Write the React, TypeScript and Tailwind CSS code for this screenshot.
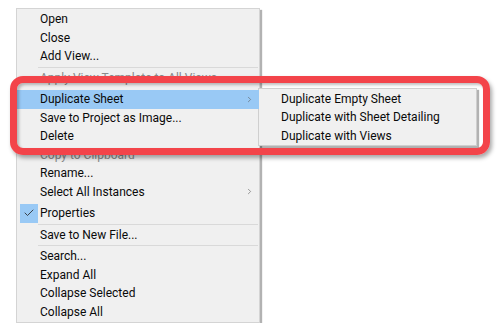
import { Check, ChevronRight } from "lucide-react"

type Row =
  | { kind: "item"; label: string; sub?: boolean; active?: boolean; checked?: boolean; dim?: boolean }
  | { kind: "sep"; line?: boolean }

const MENU: Row[] = [
  { kind: "item", label: "Open" },
  { kind: "item", label: "Close" },
  { kind: "item", label: "Add View..." },
  { kind: "sep", line: true },
  { kind: "item", label: "Apply View Template to All Views", dim: true },
  { kind: "sep" },
  { kind: "item", label: "Duplicate Sheet", sub: true, active: true },
  { kind: "item", label: "Save to Project as Image..." },
  { kind: "item", label: "Delete" },
  { kind: "item", label: "Copy to Clipboard", dim: true },
  { kind: "item", label: "Rename..." },
  { kind: "item", label: "Select All Instances", sub: true },
  { kind: "sep" },
  { kind: "item", label: "Properties", checked: true },
  { kind: "sep", line: true },
  { kind: "item", label: "Save to New File..." },
  { kind: "sep", line: true },
  { kind: "item", label: "Search..." },
  { kind: "item", label: "Expand All" },
  { kind: "item", label: "Collapse Selected" },
  { kind: "item", label: "Collapse All" },
]

const SUBMENU = ["Duplicate Empty Sheet", "Duplicate with Sheet Detailing", "Duplicate with Views"]

function MenuRow({ row }: { row: Row }) {
  if (row.kind === "sep") {
    return (
      <div className="h-[3px] flex items-center pl-[21px] pr-[1px]">
        {row.line && <div className="h-px w-full bg-[#d9d9d9]" />}
      </div>
    )
  }
  return (
    <div className={`relative h-[18.5px] flex items-center ${row.active ? "bg-[#99c9f5]" : ""}`}>
      <div className="w-[23px] h-full flex items-center justify-center">
        {row.checked && (
          <div className="w-[18px] h-[19px] bg-[#99c9f5] flex items-center justify-center">
            <Check size={12} strokeWidth={1.6} className="text-[#222]" />
          </div>
        )}
      </div>
      <span className={`flex-1 ${row.dim ? "text-[#8a8a8a]" : "text-[#0a0a0a]"}`}>{row.label}</span>
      {row.sub && <ChevronRight size={9} strokeWidth={1.5} className="text-[#555] mr-[5px]" />}
    </div>
  )
}

export default function App() {
  return (
    <div
      className="relative w-[499px] h-[323px] bg-white overflow-hidden text-[12px] leading-none"
      style={{ fontFamily: 'Roboto, "Segoe UI", sans-serif' }}
    >
      <div className="pl-[16px] pt-[8px] flex items-start">
        {/* main menu */}
        <div className="w-[244px] bg-[#f0f0f0] border border-[#d4d4d4] pt-[1px] pb-[1px] shadow-[2px_2px_1px_rgba(0,0,0,0.3)]">
          {MENU.map((row, i) => (
            <MenuRow key={i} row={row} />
          ))}
        </div>

        {/* submenu */}
        <div className="-ml-[2px] mt-[80px] w-[219px] bg-[#f0f0f0] border border-[#cfcfcf] pt-[0.5px] shadow-[2px_2px_1px_rgba(0,0,0,0.3)]">
          {SUBMENU.map((label) => (
            <div key={label} className="h-[18.5px] flex items-center pl-[22px] text-[#0a0a0a]">
              {label}
            </div>
          ))}
        </div>
      </div>

      {/* callout */}
      <div className="absolute left-[10px] top-[76px] w-[480px] h-[79px] rounded-[13px] border-[7px] border-[#f3444a] shadow-[2px_3px_4px_rgba(0,0,0,0.35),inset_2px_2px_3px_rgba(0,0,0,0.25)]" />
    </div>
  )
}
